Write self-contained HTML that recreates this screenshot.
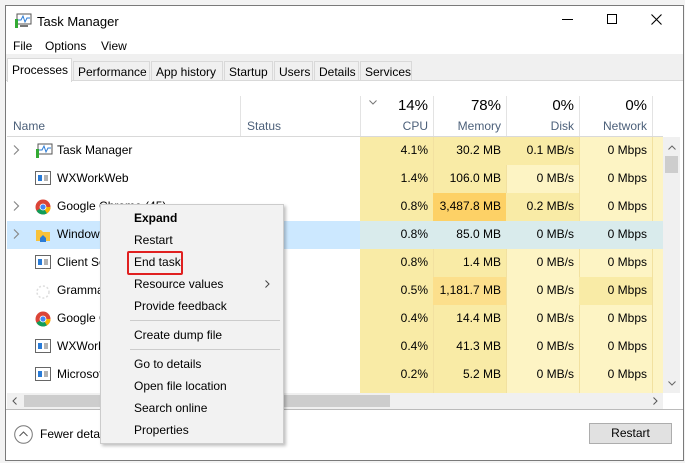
<!DOCTYPE html>
<html><head><style>
*{margin:0;padding:0;box-sizing:border-box}
body{width:685px;height:463px;background:#f3f3f3;font-family:"Liberation Sans",sans-serif;font-size:12px;color:#000;position:relative;overflow:hidden}
.win{position:absolute;left:5px;top:5px;width:679px;height:456px;background:#fff;border:1px solid #7a7a7a}
.a{position:absolute;white-space:nowrap}
.r{text-align:right}
.col{position:absolute;top:132px;height:256px}
.tab{position:absolute;top:61px;height:20px;background:#f0f0f0;border:1px solid #d9d9d9;padding:3px 4px 0;font-size:12px}
.mi{position:absolute;left:134px;font-size:12px}
.chev{position:absolute;left:13px}
</style></head><body>
<div class="win"></div>
<svg class="a" style="left:14px;top:13px" width="18" height="16"><rect x="3" y="1" width="14" height="10" fill="#fff" stroke="#555"/><polyline points="4,7 7,7 9,3 11,9 13,5 16,5" fill="none" stroke="#2a7bd6"/><rect x="1" y="6" width="3" height="9" fill="#3a3"/><rect x="6" y="12" width="8" height="2" fill="#777"/></svg>
<div class="a" style="left:37px;top:14px;font-size:13px">Task Manager</div>
<div class="a" style="left:562px;top:19px;width:11px;height:1px;background:#000"></div>
<div class="a" style="left:607px;top:14px;width:10px;height:10px;border:1px solid #000"></div>
<svg class="a" style="left:651px;top:14px" width="11" height="11"><path d="M0.5 0.5L10.5 10.5M10.5 0.5L0.5 10.5" stroke="#000" stroke-width="1.1"/></svg>
<div class="a" style="left:13px;top:39px">File</div>
<div class="a" style="left:45px;top:39px">Options</div>
<div class="a" style="left:101px;top:39px">View</div>
<div class="a" style="left:6px;top:54px;width:677px;height:27px;background:#f0f0f0;border-bottom:1px solid #d9d9d9"></div>
<div class="tab" style="left:73px;width:77px">Performance</div>
<div class="tab" style="left:151px;width:72px">App history</div>
<div class="tab" style="left:224px;width:49px">Startup</div>
<div class="tab" style="left:274px;width:39px">Users</div>
<div class="tab" style="left:314px;width:45px">Details</div>
<div class="tab" style="left:360px;width:52px">Services</div>
<div class="tab" style="left:7px;top:58px;width:65px;height:24px;background:#fff;border-bottom:none;padding-top:4px">Processes</div>
<div class="a" style="left:240px;top:96px;width:1px;height:40px;background:#e3e3e3"></div>
<div class="a" style="left:360px;top:96px;width:1px;height:40px;background:#e3e3e3"></div>
<div class="a" style="left:433px;top:96px;width:1px;height:40px;background:#e3e3e3"></div>
<div class="a" style="left:506px;top:96px;width:1px;height:40px;background:#e3e3e3"></div>
<div class="a" style="left:579px;top:96px;width:1px;height:40px;background:#e3e3e3"></div>
<div class="a" style="left:652px;top:96px;width:1px;height:40px;background:#e3e3e3"></div>
<svg class="a" style="left:369px;top:100px" width="8" height="5"><path d="M0.5 0.5L4 4L7.5 0.5" fill="none" stroke="#777"/></svg>
<div class="a r" style="left:360px;width:68px;top:97px;font-size:15px">14%</div>
<div class="a r" style="left:433px;width:68px;top:97px;font-size:15px">78%</div>
<div class="a r" style="left:506px;width:68px;top:97px;font-size:15px">0%</div>
<div class="a r" style="left:579px;width:68px;top:97px;font-size:15px">0%</div>
<div class="a" style="left:13px;top:119px;color:#4c607a">Name</div>
<div class="a" style="left:247px;top:119px;color:#4c607a">Status</div>
<div class="a r" style="left:360px;width:68px;top:119px;color:#4c607a">CPU</div>
<div class="a r" style="left:433px;width:68px;top:119px;color:#4c607a">Memory</div>
<div class="a r" style="left:506px;width:68px;top:119px;color:#4c607a">Disk</div>
<div class="a r" style="left:579px;width:68px;top:119px;color:#4c607a">Network</div>
<div class="a" style="left:7px;top:136px;width:656px;height:1px;background:#d9d9d9"></div>
<div class="col" style="left:360px;width:73px;top:137px;background:#f9eba6"></div>
<div class="col" style="left:433px;width:73px;top:137px;background:#f9eba6;border-left:1px solid #f2e1a0"></div>
<div class="col" style="left:506px;width:73px;top:137px;background:#fdf4c4;border-left:1px solid #f2e1a0"></div>
<div class="col" style="left:579px;width:73px;top:137px;background:#fdf4c4;border-left:1px solid #f2e1a0"></div>
<div class="col" style="left:652px;width:11px;top:137px;background:#fdf4c4;border-left:1px solid #f2e1a0"></div>
<div class="a" style="left:506px;top:137px;width:73px;height:28px;background:#f9eba6"></div>
<div class="a" style="left:506px;top:193px;width:73px;height:28px;background:#f9eba6"></div>
<div class="a" style="left:433px;top:193px;width:73px;height:28px;background:#fdd166"></div>
<div class="a" style="left:433px;top:277px;width:73px;height:28px;background:#fcdf8c"></div>
<div class="a" style="left:579px;top:277px;width:73px;height:28px;background:#f9eba6"></div>
<div class="a" style="left:7px;top:221px;width:353px;height:28px;background:#cce8ff"></div>
<div class="a" style="left:360px;top:221px;width:303px;height:28px;background:#d9ebec"></div>
<svg class="chev" style="top:145px" width="7" height="10"><path d="M1 0.5L5.5 5L1 9.5" fill="none" stroke="#888" stroke-width="1.2"/></svg>
<svg class="chev" style="top:201px" width="7" height="10"><path d="M1 0.5L5.5 5L1 9.5" fill="none" stroke="#888" stroke-width="1.2"/></svg>
<svg class="chev" style="top:229px" width="7" height="10"><path d="M1 0.5L5.5 5L1 9.5" fill="none" stroke="#888" stroke-width="1.2"/></svg>
<svg class="a" style="left:35px;top:143px" width="18" height="16"><rect x="3" y="1" width="14" height="10" fill="#fff" stroke="#555"/><polyline points="4,7 7,7 9,3 11,9 13,5 16,5" fill="none" stroke="#2a7bd6"/><rect x="1" y="6" width="3" height="9" fill="#3a3"/></svg>
<svg class="a" style="left:35px;top:199px" width="16" height="16"><circle cx="8" cy="8" r="7.5" fill="#db4437"/><path d="M8 8 L1.5 11.7 A7.5 7.5 0 0 0 12 14.4Z" fill="#0f9d58"/><path d="M8 8 L12 14.4 A7.5 7.5 0 0 0 15.5 8 Z" fill="#f4b400"/><circle cx="8" cy="8" r="3.4" fill="#fff"/><circle cx="8" cy="8" r="2.6" fill="#4285f4"/></svg>
<svg class="a" style="left:35px;top:311px" width="16" height="16"><circle cx="8" cy="8" r="7.5" fill="#db4437"/><path d="M8 8 L1.5 11.7 A7.5 7.5 0 0 0 12 14.4Z" fill="#0f9d58"/><path d="M8 8 L12 14.4 A7.5 7.5 0 0 0 15.5 8 Z" fill="#f4b400"/><circle cx="8" cy="8" r="3.4" fill="#fff"/><circle cx="8" cy="8" r="2.6" fill="#4285f4"/></svg>
<svg class="a" style="left:35px;top:227px" width="16" height="16"><path d="M1 3h5l2 2h7v9H1z" fill="#f8c23a"/><path d="M5 15v-4l3-3 3 3v4z" fill="#2a7bd6"/></svg>
<svg class="a" style="left:35px;top:284px" width="16" height="16"><circle cx="8" cy="8" r="6" fill="none" stroke="#ddd" stroke-width="1.5" stroke-dasharray="2 2"/></svg>
<div class="a" style="left:57px;top:143px">Task Manager</div>
<div class="a" style="left:57px;top:171px">WXWorkWeb</div>
<div class="a" style="left:57px;top:199px">Google Chrome (45)</div>
<div class="a" style="left:57px;top:227px">Windows Explorer</div>
<div class="a" style="left:57px;top:255px">Client Server</div>
<div class="a" style="left:57px;top:283px">Grammarly</div>
<div class="a" style="left:57px;top:311px">Google Chrome</div>
<div class="a" style="left:57px;top:339px">WXWork</div>
<div class="a" style="left:57px;top:367px">Microsoft</div>
<svg class="a" style="left:35px;top:171px" width="16" height="14"><rect x="0.5" y="0.5" width="15" height="13" fill="#fff" stroke="#666"/><rect x="3" y="4" width="4" height="6" fill="#2a7bd6"/><path d="M9 5h4M9 7h4M9 9h4" stroke="#666"/></svg>
<svg class="a" style="left:35px;top:255px" width="16" height="14"><rect x="0.5" y="0.5" width="15" height="13" fill="#fff" stroke="#666"/><rect x="3" y="4" width="4" height="6" fill="#2a7bd6"/><path d="M9 5h4M9 7h4M9 9h4" stroke="#666"/></svg>
<svg class="a" style="left:35px;top:339px" width="16" height="14"><rect x="0.5" y="0.5" width="15" height="13" fill="#fff" stroke="#666"/><rect x="3" y="4" width="4" height="6" fill="#2a7bd6"/><path d="M9 5h4M9 7h4M9 9h4" stroke="#666"/></svg>
<svg class="a" style="left:35px;top:367px" width="16" height="14"><rect x="0.5" y="0.5" width="15" height="13" fill="#fff" stroke="#666"/><rect x="3" y="4" width="4" height="6" fill="#2a7bd6"/><path d="M9 5h4M9 7h4M9 9h4" stroke="#666"/></svg>
<div class="a r" style="left:360px;width:68px;top:143px;line-height:14px">4.1%<br><br>1.4%<br><br>0.8%<br><br>0.8%<br><br>0.8%<br><br>0.5%<br><br>0.4%<br><br>0.4%<br><br>0.2%</div>
<div class="a r" style="left:433px;width:68px;top:143px;line-height:14px">30.2 MB<br><br>106.0 MB<br><br>3,487.8 MB<br><br>85.0 MB<br><br>1.4 MB<br><br>1,181.7 MB<br><br>14.4 MB<br><br>41.3 MB<br><br>5.2 MB</div>
<div class="a r" style="left:506px;width:68px;top:143px;line-height:14px">0.1 MB/s<br><br>0 MB/s<br><br>0.2 MB/s<br><br>0 MB/s<br><br>0 MB/s<br><br>0 MB/s<br><br>0 MB/s<br><br>0 MB/s<br><br>0 MB/s</div>
<div class="a r" style="left:579px;width:68px;top:143px;line-height:14px">0 Mbps<br><br>0 Mbps<br><br>0 Mbps<br><br>0 Mbps<br><br>0 Mbps<br><br>0 Mbps<br><br>0 Mbps<br><br>0 Mbps<br><br>0 Mbps</div>
<div class="a" style="left:663px;top:137px;width:17px;height:256px;background:#f0f0f0"></div>
<div class="a" style="left:665px;top:156px;width:13px;height:17px;background:#cdcdcd"></div>
<svg class="a" style="left:668px;top:145px" width="8" height="5"><path d="M0.5 4.5L4 1L7.5 4.5" fill="none" stroke="#666"/></svg>
<svg class="a" style="left:668px;top:381px" width="8" height="5"><path d="M0.5 0.5L4 4L7.5 0.5" fill="none" stroke="#666"/></svg>
<div class="a" style="left:7px;top:393px;width:656px;height:16px;background:#f0f0f0"></div>
<div class="a" style="left:24px;top:395px;width:366px;height:12px;background:#cdcdcd"></div>
<svg class="a" style="left:12px;top:397px" width="5" height="8"><path d="M4.5 0.5L1 4L4.5 7.5" fill="none" stroke="#555"/></svg>
<svg class="a" style="left:653px;top:397px" width="5" height="8"><path d="M0.5 0.5L4 4L0.5 7.5" fill="none" stroke="#555"/></svg>
<div class="a" style="left:6px;top:409px;width:677px;height:1px;background:#bbb"></div>
<svg class="a" style="left:14px;top:425px" width="19" height="19"><circle cx="9.5" cy="9.5" r="8.8" fill="none" stroke="#777"/><path d="M5.5 11L9.5 7L13.5 11" fill="none" stroke="#555"/></svg>
<div class="a" style="left:40px;top:427px">Fewer details</div>
<div class="a" style="left:589px;top:423px;width:83px;height:21px;background:#e1e1e1;border:1px solid #adadad;text-align:center;line-height:19px">Restart</div>
<div class="a" style="left:100px;top:204px;width:184px;height:240px;background:#f2f2f2;border:1px solid #ccc;box-shadow:2px 2px 3px rgba(0,0,0,.25)"></div>
<div class="mi" style="top:211px;font-weight:bold">Expand</div>
<div class="mi" style="top:233px">Restart</div>
<div class="mi" style="top:255px">End task</div>
<div class="a" style="left:127px;top:251px;width:56px;height:24px;border:2px solid #e02020;border-radius:2px"></div>
<div class="mi" style="top:277px">Resource values</div>
<svg class="a" style="left:265px;top:280px" width="5" height="8"><path d="M0.5 0.5L4 4L0.5 7.5" fill="none" stroke="#444"/></svg>
<div class="mi" style="top:299px">Provide feedback</div>
<div class="a" style="left:130px;top:320px;width:150px;height:1px;background:#ccc"></div>
<div class="mi" style="top:328px">Create dump file</div>
<div class="a" style="left:130px;top:349px;width:150px;height:1px;background:#ccc"></div>
<div class="mi" style="top:357px">Go to details</div>
<div class="mi" style="top:379px">Open file location</div>
<div class="mi" style="top:401px">Search online</div>
<div class="mi" style="top:423px">Properties</div>
</body></html>
